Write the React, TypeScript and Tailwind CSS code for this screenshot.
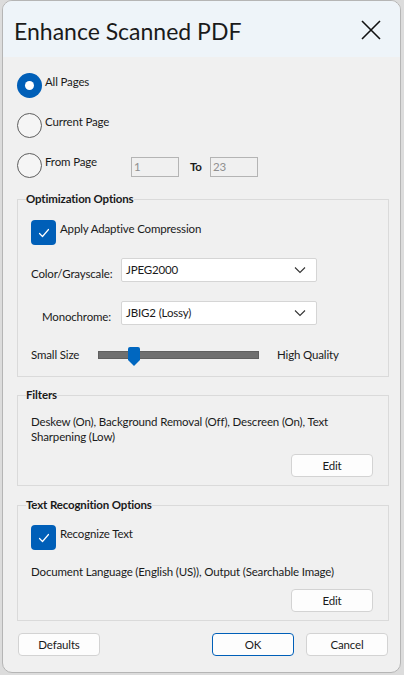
import { useState } from "react";

const txt = "text-[11.5px] leading-[16px] tracking-[-0.15px]";

const Radio = ({ checked, label, onClick }: { checked: boolean; label: string; onClick: () => void }) => (
    <div className="flex items-start cursor-default" onClick={onClick}>
        {checked ? (
            <div className="w-[25px] h-[25px] rounded-full bg-[#005fb8] flex items-center justify-center shrink-0">
                <div className="w-[9px] h-[9px] rounded-full bg-white" />
            </div>
        ) : (
            <div className="w-[25px] h-[25px] rounded-full border-[1.5px] border-[#5e5e5e] bg-[#f5f5f5] shrink-0" />
        )}
        <span className={`ml-[3px] mt-[1px] ${txt}`}>{label}</span>
    </div>
);

const Checkbox = ({ label }: { label: string }) => (
    <div className="flex items-start">
        <div className="w-[25px] h-[25px] rounded-[4px] bg-[#005fb8] flex items-center justify-center shrink-0">
            <svg width="14" height="14" viewBox="0 0 14 14" fill="none">
                <path d="M2.5 7.5 L5.5 10.5 L11.5 3.5" stroke="white" strokeWidth="1.2" strokeLinecap="round" strokeLinejoin="round" />
            </svg>
        </div>
        <span className={`ml-[4px] mt-[1px] ${txt}`}>{label}</span>
    </div>
);

const Select = ({ value }: { value: string }) => (
    <div className="w-[196px] h-[24px] bg-white border border-[#d5d5d5] rounded-[2px] flex items-center justify-between pl-[4px] pr-[10px]">
        <span className={txt}>{value}</span>
        <svg width="12" height="8" viewBox="0 0 12 8" fill="none">
            <path d="M1 1.5 L6 6.5 L11 1.5" stroke="#333" strokeWidth="1.1" />
        </svg>
    </div>
);

const Button = ({ label, primary = false }: { label: string; primary?: boolean }) => (
    <button
        className={`w-[82px] h-[23px] rounded-[4px] bg-[#fdfdfd] ${txt} text-[#1a1a1a] border ${
            primary ? "border-[#005fb8]" : "border-[#d3d3d3]"
        }`}
    >
        {label}
    </button>
);

export default function App() {
    const [range, setRange] = useState("all");

    return (
        <div
            className="w-[404px] h-[675px] bg-[#dcdcdc] overflow-hidden text-[#1a1a1a]"
            style={{ fontFamily: "Lato, 'Noto Sans', sans-serif" }}
        >
            <div className="ml-[2px] w-[399px] h-[673px] rounded-[10px] border border-[#b5b5b5] bg-[#f0f0f0] overflow-hidden flex flex-col">
                {/* Title bar */}
                <div className="h-[56px] shrink-0 bg-[#eef4f9] flex items-center justify-between pl-[11px] pr-[19px]">
                    <h1 className="text-[23px] leading-[28px] text-[#1a1a1a] mt-[4px]">Enhance Scanned PDF</h1>
                    <svg width="20" height="20" viewBox="0 0 20 20" className="mt-[2px]">
                        <path d="M1 1 L19 19 M19 1 L1 19" stroke="#111" strokeWidth="1.6" />
                    </svg>
                </div>

                <div className="pl-[14px] pt-[16px] flex flex-col">
                    {/* Page range */}
                    <div className="flex flex-col gap-[15px]">
                        <Radio checked={range === "all"} label="All Pages" onClick={() => setRange("all")} />
                        <Radio checked={range === "current"} label="Current Page" onClick={() => setRange("current")} />
                        <div className="flex items-start">
                            <div className="w-[114px] shrink-0">
                                <Radio checked={range === "from"} label="From Page" onClick={() => setRange("from")} />
                            </div>
                            <div className={`mt-[4px] w-[48px] h-[20px] border border-[#b4b4b4] bg-[#f0f0f0] ${txt} !leading-[18px] text-[#8f8f8f] pl-[2px]`}>1</div>
                            <span className={`mt-[6px] ml-[11px] w-[20px] ${txt} font-bold`}>To</span>
                            <div className={`mt-[4px] w-[48px] h-[20px] border border-[#b4b4b4] bg-[#f0f0f0] ${txt} !leading-[18px] text-[#8f8f8f] pl-[2px]`}>23</div>
                        </div>
                    </div>

                    {/* Optimization Options */}
                    <fieldset className="mt-[13px] w-[372px] border border-[#dadada] pl-[13px] pr-[15px] pt-[13px] pb-[12px]">
                        <legend className={`-ml-[5px] ${txt} font-bold`}>Optimization Options</legend>
                        <Checkbox label="Apply Adaptive Compression" />
                        <div className="mt-[13px] flex items-center">
                            <span className={`w-[80px] text-right ${txt} mt-[8px]`}>Color/Grayscale:</span>
                            <div className="ml-[10px]">
                                <Select value="JPEG2000" />
                            </div>
                        </div>
                        <div className="mt-[19px] flex items-center">
                            <span className={`w-[80px] text-right ${txt} mt-[8px]`}>Monochrome:</span>
                            <div className="ml-[10px]">
                                <Select value="JBIG2 (Lossy)" />
                            </div>
                        </div>
                        <div className="mt-[20px] h-[19px] flex items-center">
                            <span className={`w-[67px] ${txt}`}>Small Size</span>
                            <div className="relative w-[161px] h-[8px] bg-[#6f6f6f] border border-[#5f5f5f]">
                                <svg width="12" height="19" viewBox="0 0 12 19" className="absolute left-[29px] top-[-5px]">
                                    <path d="M2 0 H10 A2 2 0 0 1 12 2 V13 L6 19 L0 13 V2 A2 2 0 0 1 2 0 Z" fill="#0067c0" />
                                </svg>
                            </div>
                            <span className={`ml-[18px] ${txt}`}>High Quality</span>
                        </div>
                    </fieldset>

                    {/* Filters */}
                    <fieldset className="mt-[10px] w-[372px] border border-[#dadada] pl-[13px] pr-[15px] pt-[11px] pb-[8px]">
                        <legend className={`-ml-[5px] ${txt} font-bold`}>Filters</legend>
                        <p className={`${txt} !leading-[15px] w-[310px]`}>
                            Deskew (On), Background Removal (Off), Descreen (On), Text Sharpening (Low)
                        </p>
                        <div className="mt-[10px] flex justify-end">
                            <Button label="Edit" />
                        </div>
                    </fieldset>

                    {/* Text Recognition Options */}
                    <fieldset className="mt-[11px] w-[372px] border border-[#dadada] pl-[13px] pr-[15px] pt-[12px] pb-[8px]">
                        <legend className={`-ml-[5px] ${txt} font-bold`}>Text Recognition Options</legend>
                        <Checkbox label="Recognize Text" />
                        <p className={`mt-[14px] ${txt} !leading-[15px]`}>
                            Document Language (English (US)), Output (Searchable Image)
                        </p>
                        <div className="mt-[10px] flex justify-end">
                            <Button label="Edit" />
                        </div>
                    </fieldset>

                    {/* Footer */}
                    <div className="mt-[12px] w-[371px] pl-[1px] flex items-center justify-between">
                        <Button label="Defaults" />
                        <div className="flex gap-[12px]">
                            <Button label="OK" primary />
                            <Button label="Cancel" />
                        </div>
                    </div>
                </div>
            </div>
        </div>
    );
}
